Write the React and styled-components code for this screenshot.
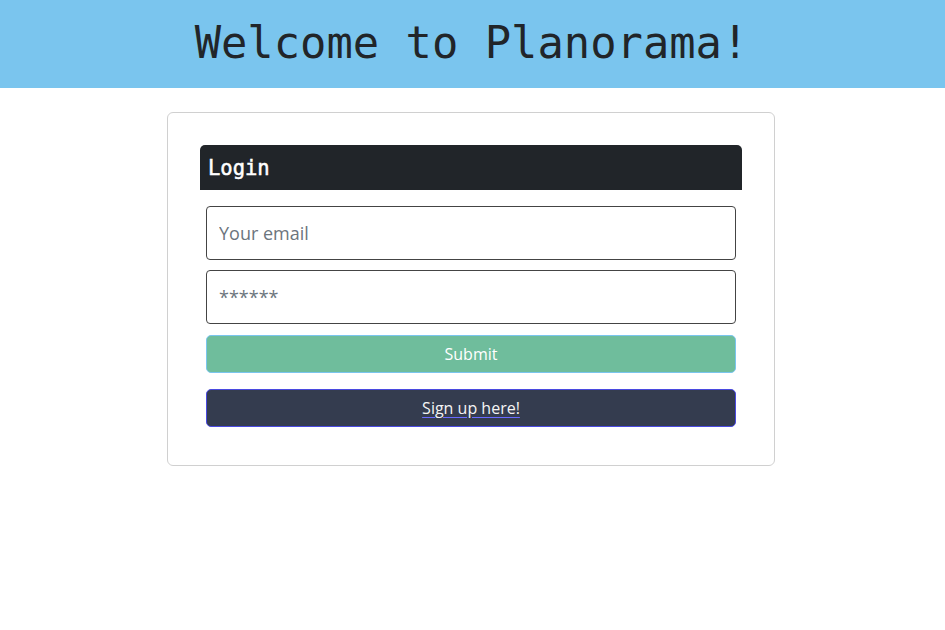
import React, { useState } from 'react'
import styled, { createGlobalStyle } from 'styled-components'

const GlobalStyle = createGlobalStyle`
  body {
    margin: 0;
    background: #fff;
    font-family: "Open Sans", "Noto Sans", sans-serif;
  }
  * { box-sizing: border-box; }
`

const App = () => {
  const [email, setEmail] = useState('')
  const [password, setPassword] = useState('')

  const onSubmit = (e) => {
    e.preventDefault()
  }

  return (
    <>
      <GlobalStyle />
      <Header>
        <Title>Welcome to Planorama!</Title>
      </Header>
      <Main>
        <Card>
          <CardHeader>Login</CardHeader>
          <Form onSubmit={onSubmit}>
            <Input
              type="email"
              placeholder="Your email"
              value={email}
              onChange={(e) => setEmail(e.target.value)}
            />
            <Input
              type="password"
              placeholder="******"
              value={password}
              onChange={(e) => setPassword(e.target.value)}
            />
            <Button type="submit" variant="submit">Submit</Button>
            <Button type="button" variant="signup">
              <LinkText>Sign up here!</LinkText>
            </Button>
          </Form>
        </Card>
      </Main>
    </>
  )
}

export default App

const Header = styled.header`
  height: 88px;
  background: #7ac5ee;
  display: flex;
  align-items: center;
  justify-content: center;
`
const Title = styled.h1`
  margin: 0;
  font-family: "DejaVu Sans Mono", monospace;
  font-weight: normal;
  font-size: 43.8px;
  color: #212529;
  transform: translate(-1px, -2px);
`
const Main = styled.main`
  display: flex;
  justify-content: center;
  padding: 24px 3px 0 0;
`
const Card = styled.div`
  width: 608px;
  border: 1px solid #d0d0d0;
  border-radius: 6px;
  padding: 32px 32px 38px;
`
const CardHeader = styled.div`
  height: 45px;
  background: #212529;
  color: #fff;
  border-radius: 5px 5px 0 0;
  font-family: "DejaVu Sans Mono", monospace;
  font-size: 20.5px;
  -webkit-text-stroke: 0.5px #fff;
  padding: 0 8px;
  display: flex;
  align-items: center;
`
const Form = styled.form`
  display: flex;
  flex-direction: column;
  padding: 16px 6px 0;
`
const Input = styled.input`
  height: 54px;
  border: 1px solid #444;
  border-radius: 4px;
  padding: 0 12px;
  font-family: "Open Sans", "Noto Sans", sans-serif;
  font-size: 18px;
  color: #212529;
  margin-bottom: 10px;
  &::placeholder {
    color: #6c757d;
  }
  &:focus {
    outline: none;
  }
`
const Button = styled.button`
  height: 38px;
  border-radius: 5px;
  font-family: "Open Sans", "Noto Sans", sans-serif;
  font-size: 16px;
  color: #fff;
  cursor: pointer;
  background: ${(p) => (p.variant === 'submit' ? '#6fbd9c' : '#343c4f')};
  border: 1px solid ${(p) => (p.variant === 'submit' ? '#7ac5ee' : '#4a4ae0')};
  margin-top: ${(p) => (p.variant === 'submit' ? '1px' : '16px')};
`
const LinkText = styled.span`
  text-decoration: underline;
  text-decoration-color: #6a6aff;
  text-underline-offset: 3px;
  color: #f4f4f4;
`
